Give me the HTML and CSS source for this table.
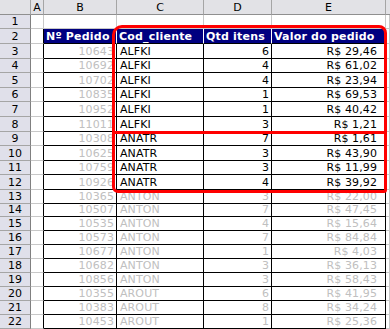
FILE: index.html
```html
<!DOCTYPE html>
<html lang="pt">
<head>
<meta charset="utf-8">
<title>Planilha</title>
<link rel="stylesheet" href="styles.css">
</head>
<body>
<div class="sheet">
  <div class="corner"></div><div class="ch">A</div><div class="ch">B</div><div class="ch">C</div><div class="ch">D</div><div class="ch">E</div><div class="ch last"></div>

  <div class="rh">1</div><div class="c"></div><div class="c"></div><div class="c"></div><div class="c"></div><div class="c"></div><div class="c"></div>

  <div class="rh">2</div><div class="c edge"></div><div class="hd">Nº Pedido</div><div class="hd">Cod_cliente</div><div class="hd">Qtd itens</div><div class="hd">Valor do pedido</div><div class="c"></div>

  <div class="rh">3</div><div class="c edge"></div><div class="d num dim">10643</div><div class="d">ALFKI</div><div class="d num">6</div><div class="d money">R$ 29,46</div><div class="c"></div>
  <div class="rh">4</div><div class="c edge"></div><div class="d num dim">10692</div><div class="d">ALFKI</div><div class="d num">4</div><div class="d money">R$ 61,02</div><div class="c"></div>
  <div class="rh">5</div><div class="c edge"></div><div class="d num dim">10702</div><div class="d">ALFKI</div><div class="d num">4</div><div class="d money">R$ 23,94</div><div class="c"></div>
  <div class="rh">6</div><div class="c edge"></div><div class="d num dim">10835</div><div class="d">ALFKI</div><div class="d num">1</div><div class="d money">R$ 69,53</div><div class="c"></div>
  <div class="rh">7</div><div class="c edge"></div><div class="d num dim">10952</div><div class="d">ALFKI</div><div class="d num">1</div><div class="d money">R$ 40,42</div><div class="c"></div>
  <div class="rh">8</div><div class="c edge"></div><div class="d num dim">11011</div><div class="d">ALFKI</div><div class="d num">3</div><div class="d money">R$ 1,21</div><div class="c"></div>
  <div class="rh">9</div><div class="c edge"></div><div class="d num dim">10308</div><div class="d">ANATR</div><div class="d num">7</div><div class="d money">R$ 1,61</div><div class="c"></div>
  <div class="rh">10</div><div class="c edge"></div><div class="d num dim">10625</div><div class="d">ANATR</div><div class="d num">3</div><div class="d money">R$ 43,90</div><div class="c"></div>
  <div class="rh">11</div><div class="c edge"></div><div class="d num dim">10759</div><div class="d">ANATR</div><div class="d num">3</div><div class="d money">R$ 11,99</div><div class="c"></div>
  <div class="rh">12</div><div class="c edge"></div><div class="d num dim">10926</div><div class="d">ANATR</div><div class="d num">4</div><div class="d money">R$ 39,92</div><div class="c"></div>
  <div class="rh">13</div><div class="c edge"></div><div class="d num dim">10365</div><div class="d dim">ANTON</div><div class="d num dim">3</div><div class="d money dim">R$ 22,00</div><div class="c"></div>
  <div class="rh">14</div><div class="c edge"></div><div class="d num dim">10507</div><div class="d dim">ANTON</div><div class="d num dim">7</div><div class="d money dim">R$ 47,45</div><div class="c"></div>
  <div class="rh">15</div><div class="c edge"></div><div class="d num dim">10535</div><div class="d dim">ANTON</div><div class="d num dim">4</div><div class="d money dim">R$ 15,64</div><div class="c"></div>
  <div class="rh">16</div><div class="c edge"></div><div class="d num dim">10573</div><div class="d dim">ANTON</div><div class="d num dim">7</div><div class="d money dim">R$ 84,84</div><div class="c"></div>
  <div class="rh">17</div><div class="c edge"></div><div class="d num dim">10677</div><div class="d dim">ANTON</div><div class="d num dim">1</div><div class="d money dim">R$ 4,03</div><div class="c"></div>
  <div class="rh">18</div><div class="c edge"></div><div class="d num dim">10682</div><div class="d dim">ANTON</div><div class="d num dim">3</div><div class="d money dim">R$ 36,13</div><div class="c"></div>
  <div class="rh">19</div><div class="c edge"></div><div class="d num dim">10856</div><div class="d dim">ANTON</div><div class="d num dim">3</div><div class="d money dim">R$ 58,43</div><div class="c"></div>
  <div class="rh">20</div><div class="c edge"></div><div class="d num dim">10355</div><div class="d dim">AROUT</div><div class="d num dim">6</div><div class="d money dim">R$ 41,95</div><div class="c"></div>
  <div class="rh">21</div><div class="c edge"></div><div class="d num dim">10383</div><div class="d dim">AROUT</div><div class="d num dim">8</div><div class="d money dim">R$ 34,24</div><div class="c"></div>
  <div class="rh">22</div><div class="c edge"></div><div class="d num dim">10453</div><div class="d dim">AROUT</div><div class="d num dim">1</div><div class="d money dim">R$ 25,36</div><div class="c"></div>

  <div class="mark"><div class="mark-split"></div></div>
</div>
</body>
</html>
```

FILE: styles.css
```css
html, body {
  margin: 0;
  padding: 0;
  background: #ffffff;
  overflow: hidden;
}

.sheet {
  position: relative;
  display: grid;
  width: 390px;
  height: 329px;
  grid-template-columns: 31px 13px 73px 87px 68px 114px 1fr;
  grid-template-rows: 15px 14px 15px 15px 14px 15px 14px 15px 15px 14px 15px 14px 15px 14px 13px repeat(8, 14px);
  font-family: "DejaVu Sans", Verdana, sans-serif;
  font-size: 11px;
  line-height: 13px;
  color: #000000;
  overflow: hidden;
}

.sheet > div {
  box-sizing: border-box;
  white-space: nowrap;
  overflow: hidden;
}

.corner,
.ch {
  background: #e2e2e6;
  border-right: 1px solid #a5a5a5;
  border-bottom: 1px solid #8f8f8f;
  display: flex;
  align-items: center;
  justify-content: center;
  font-size: 11px;
}

.ch.last {
  border-right: none;
}

.rh {
  background: #e0e0ea;
  border-right: 1px solid #808080;
  border-bottom: 1px solid #a5a5a5;
  display: flex;
  align-items: flex-end;
  justify-content: center;
}

.c {
  background: #ffffff;
  border-right: 1px solid #c8c8c8;
  border-bottom: 1px solid #c8c8c8;
}

.c.edge {
  border-right-color: #000000;
}

.hd {
  background: #000080;
  color: #ffffff;
  font-weight: bold;
  letter-spacing: 0.2px;
  border-right: 1px solid #ffffff;
  border-bottom: 1px solid #000000;
  display: flex;
  align-items: flex-end;
  padding-left: 2px;
}

.d {
  background: #ffffff;
  border-right: 1px solid #000000;
  border-bottom: 1px solid #000000;
  display: flex;
  align-items: flex-end;
  padding-left: 3px;
  letter-spacing: 0.1px;
}

.d.num {
  justify-content: flex-end;
  padding-left: 0;
  padding-right: 2px;
}

.d.money {
  justify-content: flex-end;
  padding-left: 0;
  padding-right: 8px;
}

.dim {
  color: #c0c0c0;
}

.mark {
  position: absolute;
  left: 112px;
  top: 25px;
  width: 275px;
  height: 168px;
  box-sizing: border-box;
  border: 3px solid #ff0000;
  border-radius: 10px 8px 3px 6px;
}

.mark-split {
  position: absolute;
  left: 0;
  right: 0;
  top: 103px;
  height: 3px;
  background: #ff0000;
}
```
